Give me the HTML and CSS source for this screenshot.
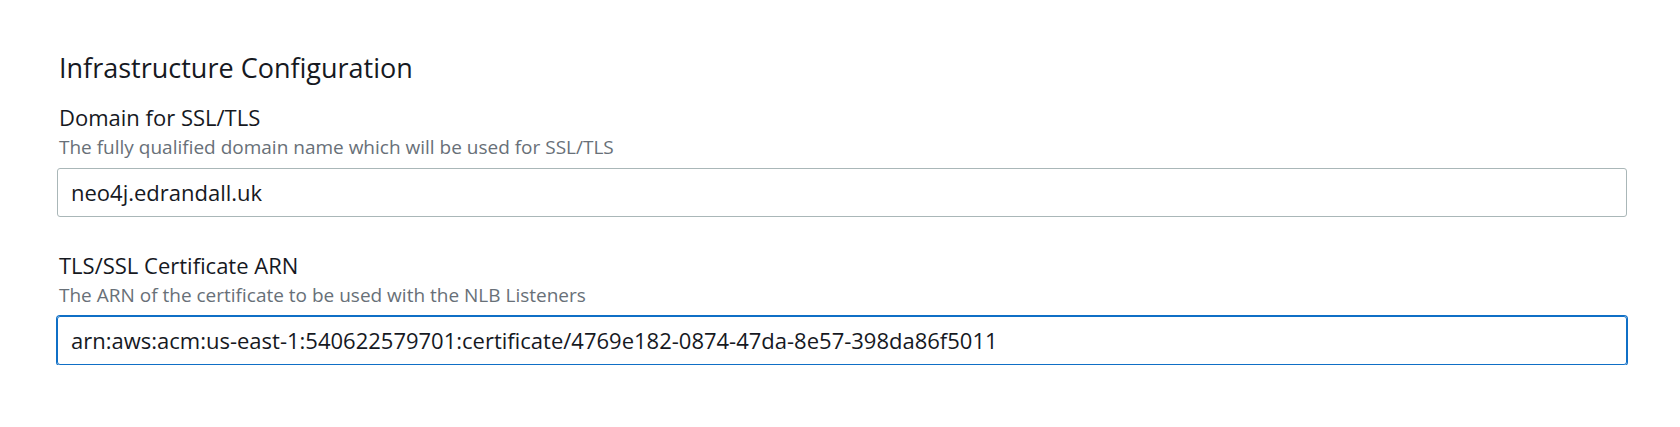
FILE: index.html
```html
<!DOCTYPE html>
<html lang="en">
<head>
<meta charset="utf-8">
<title>Infrastructure Configuration</title>
<link rel="stylesheet" href="styles.css">
</head>
<body>
<main class="page">
  <section class="panel">
    <h2 class="panel-title">Infrastructure Configuration</h2>
    <div class="field">
      <div class="field-label">Domain for SSL/TLS</div>
      <div class="field-desc">The fully qualified domain name which will be used for SSL/TLS</div>
      <div class="text-input">neo4j.edrandall.uk</div>
    </div>
    <div class="field">
      <div class="field-label">TLS/SSL Certificate ARN</div>
      <div class="field-desc">The ARN of the certificate to be used with the NLB Listeners</div>
      <div class="text-input is-focused">arn:aws:acm:us-east-1:540622579701:certificate/4769e182-0874-47da-8e57-398da86f5011</div>
    </div>
  </section>
</main>
</body>
</html>
```
FILE: styles.css
```css
html, body {
  margin: 0;
  padding: 0;
  background: #ffffff;
}

body {
  font-family: "Open Sans", "Noto Sans", sans-serif;
  color: #16191f;
}

.page {
  padding: 50px 53px 0 57px;
}

.panel {
  display: flex;
  flex-direction: column;
  gap: 34px;
}

.panel-title {
  margin: 0 0 -17px 2px;
  font-size: 27px;
  line-height: 36px;
  font-weight: 400;
  color: #16191f;
}

.field {
  display: flex;
  flex-direction: column;
}

.field-label {
  margin-left: 2px;
  font-size: 22px;
  line-height: 28px;
  font-weight: 400;
  color: #16191f;
}

.field-desc {
  margin: 5px 0 0 2px;
  font-size: 19px;
  line-height: 22px;
  color: #687078;
}

.text-input {
  box-sizing: border-box;
  margin-top: 10px;
  height: 49px;
  padding: 0 13px;
  border: 1px solid #aab7b8;
  border-radius: 3px;
  font-size: 22px;
  line-height: 47px;
  color: #16191f;
  white-space: nowrap;
  overflow: hidden;
}

.text-input.is-focused {
  border-color: #0f6fc6;
  box-shadow: 0 0 0 1px #0f6fc6;
}
```
